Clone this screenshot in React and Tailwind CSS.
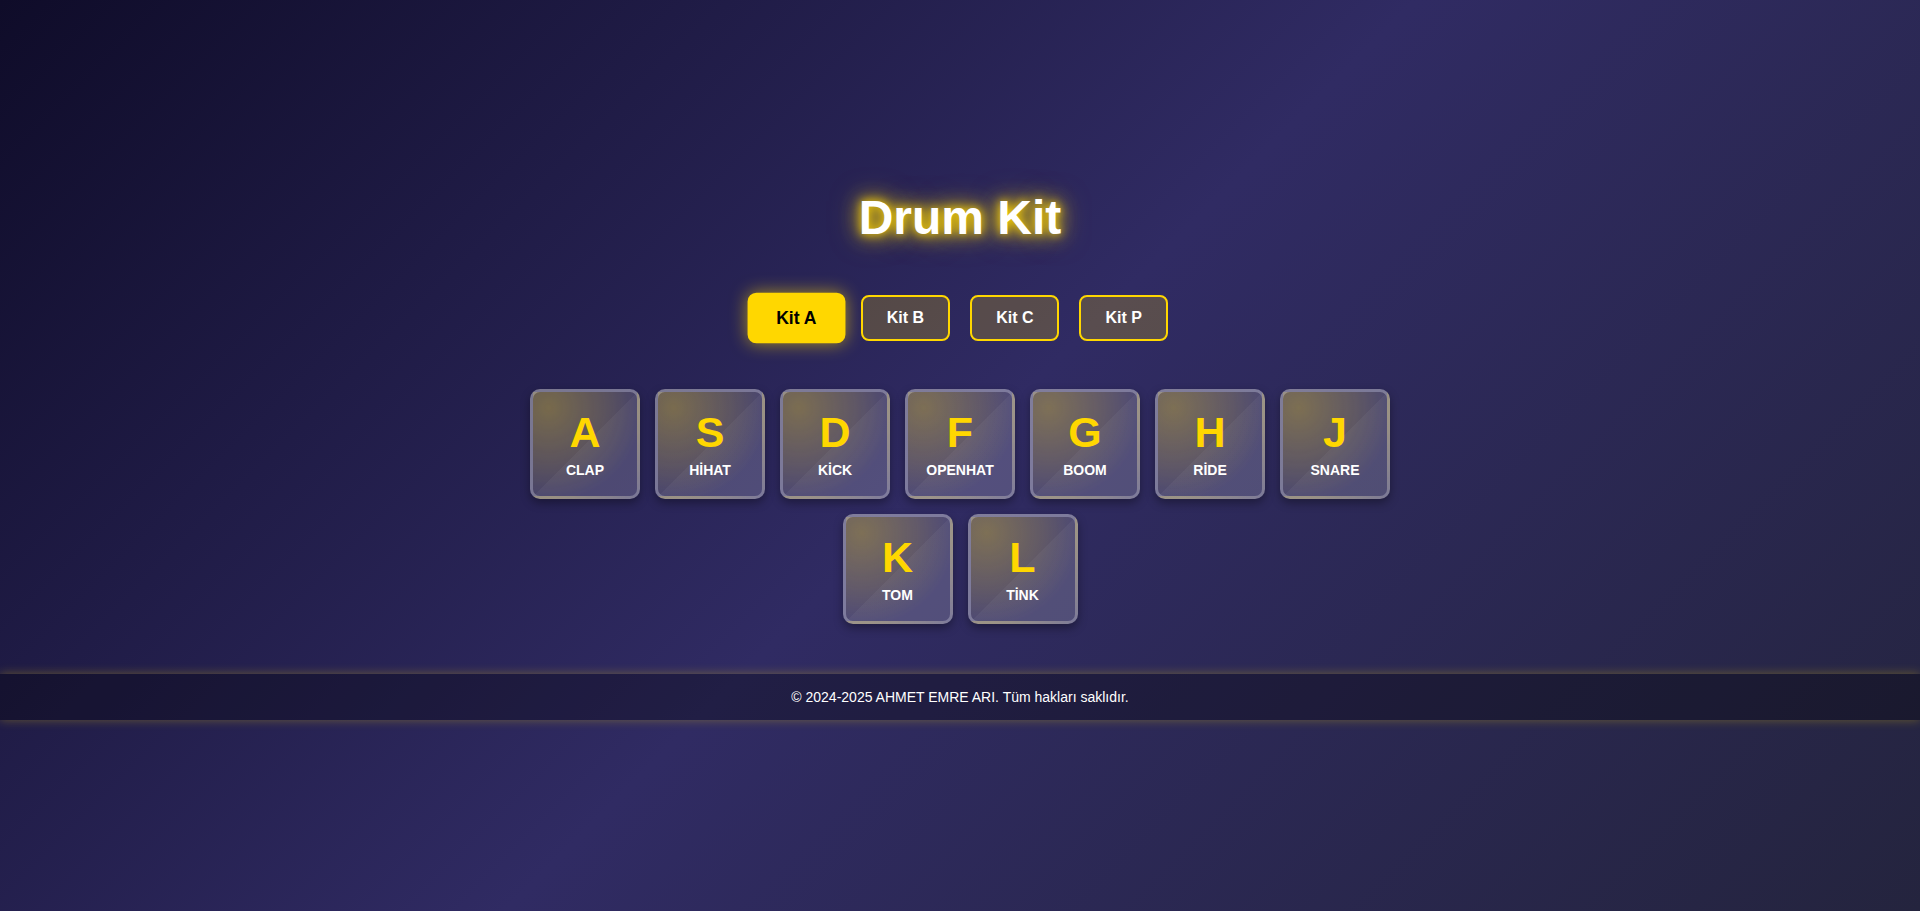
import React from "react";

const keys = [
  ["A", "CLAP"],
  ["S", "HİHAT"],
  ["D", "KİCK"],
  ["F", "OPENHAT"],
  ["G", "BOOM"],
  ["H", "RİDE"],
  ["J", "SNARE"],
  ["K", "TOM"],
  ["L", "TİNK"],
];

const kits = ["Kit A", "Kit B", "Kit C", "Kit P"];

function Key({ letter, label }) {
  return (
    <div className="w-[110px] h-[110px] rounded-[10px] border-[3px] border-[rgba(255,255,255,0.28)] bg-[rgba(255,255,255,0.14)] bg-[radial-gradient(circle_at_15%_15%,rgba(255,215,0,0.28),rgba(255,215,0,0.12)_45%,transparent_75%)] shadow-[0_4px_10px_rgba(0,0,0,0.35)] overflow-hidden relative flex flex-col items-center justify-center gap-[9px]">
      <div className="absolute inset-0 bg-[linear-gradient(135deg,transparent_50%,rgba(255,255,255,0.04)_50%)]" />
      <span className="relative text-[43px] leading-none font-bold text-[#ffd700]">{letter}</span>
      <span className="relative text-[14px] leading-none font-bold text-white">{label}</span>
    </div>
  );
}

export default function App() {
  return (
    <div
      className="min-h-screen w-full flex flex-col items-center bg-[linear-gradient(135deg,#0f0c29,#302b63,#24243e)] text-white"
      style={{ fontFamily: '"Liberation Sans", Arial, sans-serif' }}
    >
      <h1 className="mt-[190px] h-[56px] leading-[56px] text-[48px] font-bold text-white [text-shadow:0_0_10px_#ffd700,0_0_20px_#ffd700,0_0_30px_rgba(255,215,0,0.5)]">
        Drum Kit
      </h1>
      <div className="mt-[49px] flex gap-[20px]">
        {kits.map((k, i) =>
          i === 0 ? (
            <button
              key={k}
              className="scale-110 px-[24px] py-[12px] border-2 border-[#ffd700] rounded-[8px] bg-[#ffd700] text-black text-[16px] font-bold leading-[normal] shadow-[0_0_15px_rgba(255,215,0,0.6)]"
            >
              {k}
            </button>
          ) : (
            <button
              key={k}
              className="px-[24px] py-[12px] border-2 border-[#ffd700] rounded-[8px] bg-[rgba(255,215,0,0.2)] text-white text-[16px] font-bold leading-[normal]"
            >
              {k}
            </button>
          )
        )}
      </div>
      <div className="mt-[48px] w-[860px] flex flex-wrap justify-center gap-[15px]">
        {keys.map(([l, n]) => (
          <Key key={l} letter={l} label={n} />
        ))}
      </div>
      <footer className="mt-[50px] w-full h-[46px] flex items-center justify-center bg-[rgba(0,0,0,0.3)] shadow-[0_0_10px_rgba(255,215,0,0.3)] text-[14px] text-white">
        © 2024-2025 AHMET EMRE ARI. Tüm hakları saklıdır.
      </footer>
    </div>
  );
}
